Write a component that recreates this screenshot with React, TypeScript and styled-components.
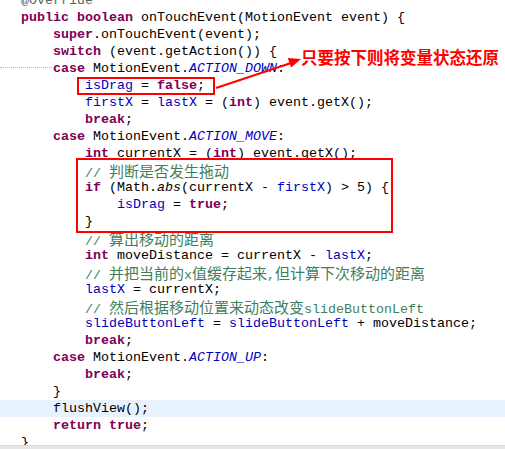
import * as React from "react";
import styled, { createGlobalStyle } from "styled-components";

const GlobalStyle = createGlobalStyle`
  html, body {
    margin: 0;
    padding: 0;
    background: #ffffff;
  }
`;

const SEditor = styled.div`
  position: relative;
  width: 505px;
  height: 449px;
  display: grid;
  grid-template-rows: 1fr 4px;
  overflow: hidden;
  background: #ffffff;
`;

const SCode = styled.div`
  overflow: hidden;
  font-family: "Liberation Mono", "Courier New", monospace;
  font-size: 13.33px;
`;

const SLines = styled.div`
  margin-top: -8px;
`;

const SLine = styled.div<{ $current?: boolean; $warn?: boolean }>`
  position: relative;
  height: 17px;
  line-height: 17px;
  padding-left: 21px;
  white-space: pre;
  color: #000000;
  background: ${(p) => (p.$current ? "#e8f2fe" : "transparent")};

  &::before {
    content: "";
    display: ${(p) => (p.$warn ? "block" : "none")};
    position: absolute;
    left: 0;
    top: 7px;
    width: 52px;
    border-top: 1px dotted #e8b830;
  }
`;

const SKeyword = styled.span`
  color: #7f0055;
  font-weight: bold;
`;

const SField = styled.span`
  color: #0000c0;
`;

const SConst = styled.span`
  color: #0000c0;
  font-style: italic;
`;

const SStatic = styled.span`
  font-style: italic;
`;

const SAnnotation = styled.span`
  color: #646464;
`;

const SComment = styled.span`
  color: #3f7f5f;
`;

const SCjk = styled.span`
  font-family: "Noto Sans CJK SC", sans-serif;
  font-size: 15px;
`;

const SScrollbar = styled.div`
  background: #e6e6e6;
  border-top: 1px solid #dcdcdc;
`;

const SMarkBox = styled.div<{ $x: number; $y: number; $w: number; $h: number }>`
  position: absolute;
  left: ${(p) => p.$x}px;
  top: ${(p) => p.$y}px;
  width: ${(p) => p.$w}px;
  height: ${(p) => p.$h}px;
  box-sizing: border-box;
  border: 2px solid #ff0000;
  pointer-events: none;
`;

const SNote = styled.div`
  position: absolute;
  left: 301px;
  top: 47px;
  font-family: "Noto Sans CJK SC", sans-serif;
  font-size: 16.5px;
  line-height: 20px;
  font-weight: bold;
  color: #ff0000;
  white-space: nowrap;
`;

const SArrow = styled.svg`
  position: absolute;
  left: 0;
  top: 0;
  pointer-events: none;
`;

type Tok = [string, string];

// k keyword, f field, s static constant, m static method, a annotation, c comment
const lines: { toks: Tok[]; current?: boolean; warn?: boolean }[] = [
  { toks: [["a", "@Override"]] },
  {
    toks: [
      ["k", "public"],
      ["p", " "],
      ["k", "boolean"],
      ["p", " onTouchEvent(MotionEvent event) {"],
    ],
  },
  { toks: [["p", "    "], ["k", "super"], ["p", ".onTouchEvent(event);"]] },
  { toks: [["p", "    "], ["k", "switch"], ["p", " (event.getAction()) {"]] },
  {
    warn: true,
    toks: [
      ["p", "    "],
      ["k", "case"],
      ["p", " MotionEvent."],
      ["s", "ACTION_DOWN"],
      ["p", ":"],
    ],
  },
  { toks: [["p", "        "], ["f", "isDrag"], ["p", " = "], ["k", "false"], ["p", ";"]] },
  {
    toks: [
      ["p", "        "],
      ["f", "firstX"],
      ["p", " = "],
      ["f", "lastX"],
      ["p", " = ("],
      ["k", "int"],
      ["p", ") event.getX();"],
    ],
  },
  { toks: [["p", "        "], ["k", "break"], ["p", ";"]] },
  {
    toks: [
      ["p", "    "],
      ["k", "case"],
      ["p", " MotionEvent."],
      ["s", "ACTION_MOVE"],
      ["p", ":"],
    ],
  },
  {
    toks: [
      ["p", "        "],
      ["k", "int"],
      ["p", " currentX = ("],
      ["k", "int"],
      ["p", ") event.getX();"],
    ],
  },
  { toks: [["p", "        "], ["c", "// 判断是否发生拖动"]] },
  {
    toks: [
      ["p", "        "],
      ["k", "if"],
      ["p", " (Math."],
      ["m", "abs"],
      ["p", "(currentX - "],
      ["f", "firstX"],
      ["p", ") > 5) {"],
    ],
  },
  { toks: [["p", "            "], ["f", "isDrag"], ["p", " = "], ["k", "true"], ["p", ";"]] },
  { toks: [["p", "        }"]] },
  { toks: [["p", "        "], ["c", "// 算出移动的距离"]] },
  {
    toks: [
      ["p", "        "],
      ["k", "int"],
      ["p", " moveDistance = currentX - "],
      ["f", "lastX"],
      ["p", ";"],
    ],
  },
  { toks: [["p", "        "], ["c", "// 并把当前的x值缓存起来,但计算下次移动的距离"]] },
  { toks: [["p", "        "], ["f", "lastX"], ["p", " = currentX;"]] },
  { toks: [["p", "        "], ["c", "// 然后根据移动位置来动态改变slideButtonLeft"]] },
  {
    toks: [
      ["p", "        "],
      ["f", "slideButtonLeft"],
      ["p", " = "],
      ["f", "slideButtonLeft"],
      ["p", " + moveDistance;"],
    ],
  },
  { toks: [["p", "        "], ["k", "break"], ["p", ";"]] },
  {
    toks: [
      ["p", "    "],
      ["k", "case"],
      ["p", " MotionEvent."],
      ["s", "ACTION_UP"],
      ["p", ":"],
    ],
  },
  { toks: [["p", "        "], ["k", "break"], ["p", ";"]] },
  { toks: [["p", "    }"]] },
  { current: true, toks: [["p", "    flushView();"]] },
  { toks: [["p", "    "], ["k", "return"], ["p", " "], ["k", "true"], ["p", ";"]] },
  { toks: [["p", "}"]] },
];

function renderComment(text: string) {
  const parts = text.split(/([\u4e00-\u9fff]+)/);
  return (
    <SComment>
      {parts.map((part, i) =>
        i % 2 === 1 ? <SCjk key={i}>{part}</SCjk> : part
      )}
    </SComment>
  );
}

function renderTok(tok: Tok, i: number) {
  const [kind, text] = tok;
  switch (kind) {
    case "k":
      return <SKeyword key={i}>{text}</SKeyword>;
    case "f":
      return <SField key={i}>{text}</SField>;
    case "s":
      return <SConst key={i}>{text}</SConst>;
    case "m":
      return <SStatic key={i}>{text}</SStatic>;
    case "a":
      return <SAnnotation key={i}>{text}</SAnnotation>;
    case "c":
      return <React.Fragment key={i}>{renderComment(text)}</React.Fragment>;
    default:
      return <React.Fragment key={i}>{text}</React.Fragment>;
  }
}

const Arrow = () => (
  <SArrow width="505" height="449" viewBox="0 0 505 449">
    <line x1="216" y1="88" x2="291" y2="63" stroke="#ff0000" strokeWidth="2" />
    <polygon points="301,59 291.1,67.6 287.8,58.1" fill="#ff0000" />
  </SArrow>
);

const App = () => {
  return (
    <>
      <GlobalStyle />
      <SEditor>
        <SCode>
          <SLines>
            {lines.map((line, n) => (
              <SLine key={n} $current={line.current} $warn={line.warn}>
                {line.toks.map(renderTok)}
              </SLine>
            ))}
          </SLines>
        </SCode>
        <SScrollbar />
        <SMarkBox $x={77} $y={77} $w={138} $h={18} />
        <SMarkBox $x={76} $y={158} $w={317} $h={75} />
        <Arrow />
        <SNote>只要按下则将变量状态还原</SNote>
      </SEditor>
    </>
  );
};

export default App;
